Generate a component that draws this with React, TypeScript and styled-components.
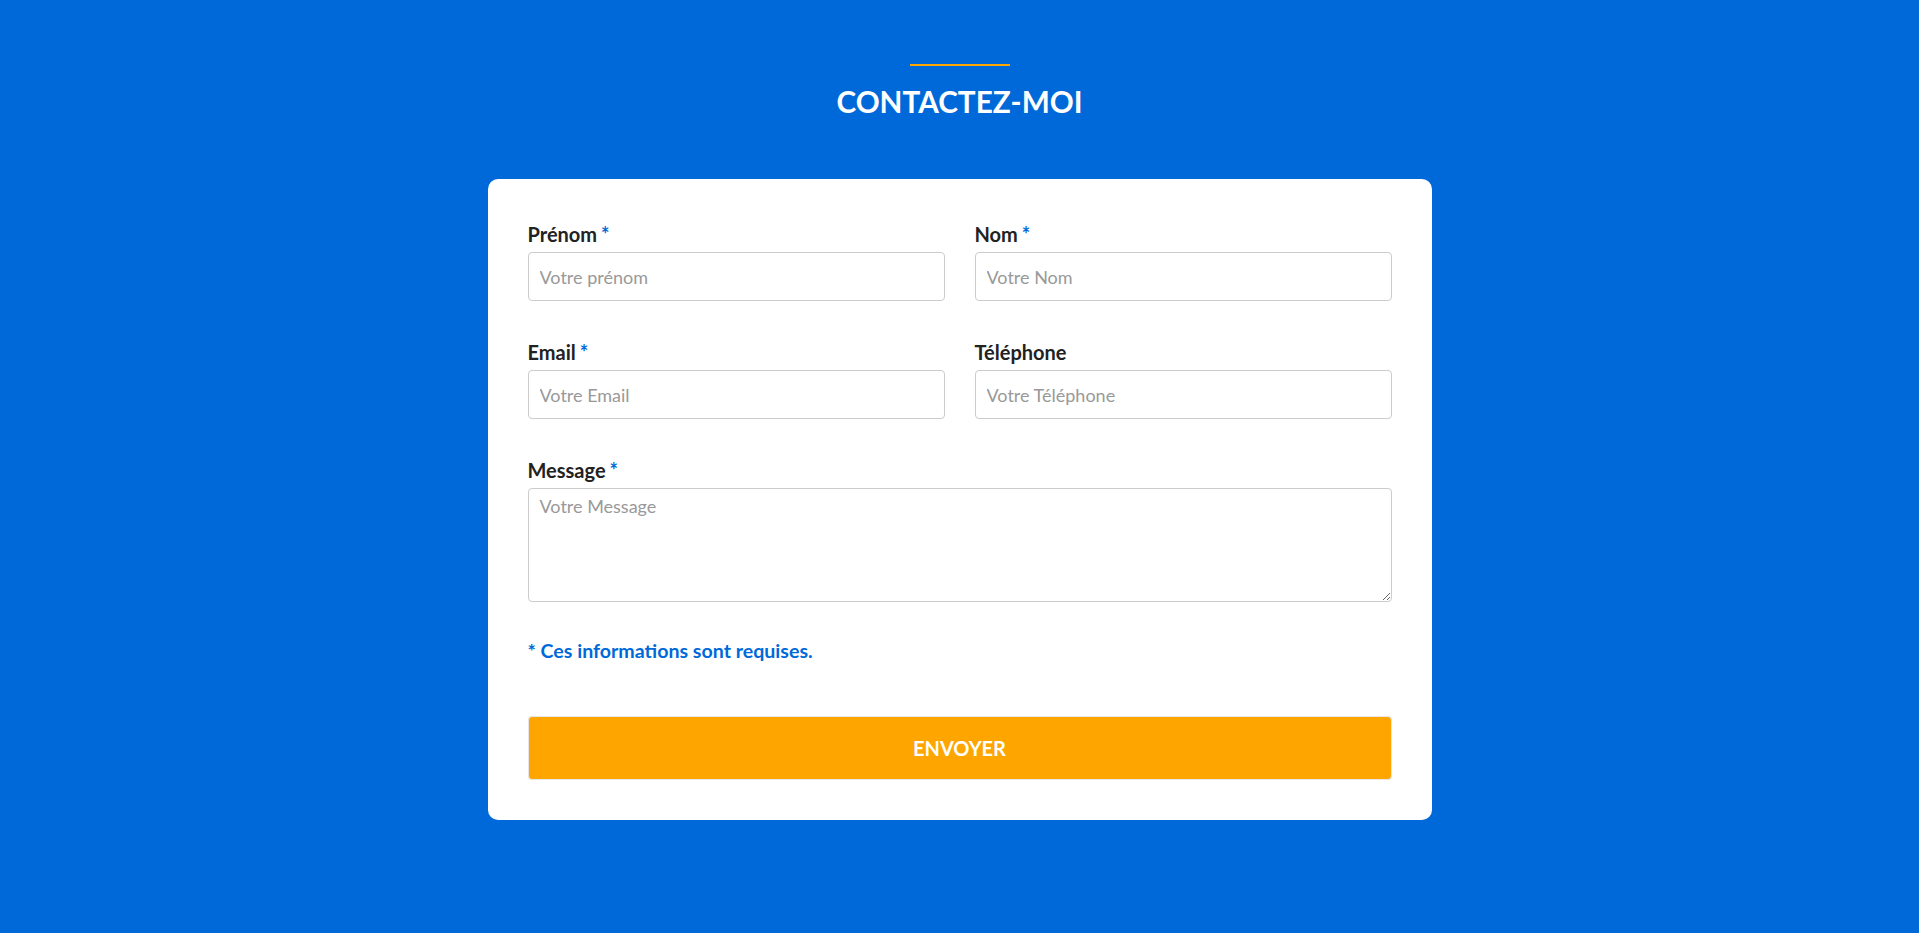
import React from "react";
import styled, { createGlobalStyle } from "styled-components";

const GlobalStyle = createGlobalStyle`
  html, body {
    margin: 0;
    padding: 0;
    background: #0069d9;
    font-family: Lato, "Open Sans", sans-serif;
  }
  * { box-sizing: border-box; }
`;

const Page = styled.section`
  min-height: 100vh;
  background: #0069d9;
  display: flex;
  flex-direction: column;
  align-items: center;
  padding-top: 64px;
`;

const Accent = styled.div`
  width: 100px;
  height: 2px;
  background: #ffa500;
`;

const Title = styled.h2`
  margin: 18px 0 59px;
  font-family: Lato, sans-serif;
  font-weight: 700;
  font-size: 29.7px;
  line-height: 36px;
  color: #ffffff;
  text-transform: uppercase;
`;

const Card = styled.form`
  width: 944px;
  background: #ffffff;
  border-radius: 10px;
  padding: 40px;
`;

const Row = styled.div`
  display: grid;
  grid-template-columns: 1fr 1fr;
  column-gap: 30px;
`;

const Group = styled.div`
  display: flex;
  flex-direction: column;
  margin-bottom: 36px;
`;

const Label = styled.label`
  font-family: Lato, sans-serif;
  font-weight: 700;
  font-size: 20px;
  line-height: 30px;
  color: #222222;
  margin-bottom: 3px;
`;

const Star = styled.span`
  color: #0069d9;
  margin-left: 4px;
`;

const Input = styled.input`
  display: block;
  width: 100%;
  height: 49px;
  border: 1px solid #cccccc;
  border-radius: 4px;
  padding: 0 11px;
  font-family: Lato, sans-serif;
  font-size: 18px;
  color: #333;
  outline: none;
  &::placeholder { color: #999999; }
`;

const TextArea = styled.textarea`
  display: block;
  width: 100%;
  height: 114px;
  border: 1px solid #cccccc;
  border-radius: 4px;
  padding: 6px 11px;
  font-family: Lato, sans-serif;
  font-size: 18px;
  color: #333;
  outline: none;
  &::placeholder { color: #999999; }
`;

const Note = styled.p`
  margin: -2px 0 50px;
  font-family: Lato, sans-serif;
  font-weight: 700;
  font-size: 19.6px;
  line-height: 30px;
  color: #0069d9;
`;

const Submit = styled.button`
  display: block;
  width: 100%;
  height: 64px;
  background: #ffa500;
  border: 1px solid #e6e6e6;
  border-radius: 4px;
  color: #ffffff;
  font-family: Lato, sans-serif;
  font-weight: 700;
  font-size: 20px;
  text-transform: uppercase;
  cursor: pointer;
`;

export default function App() {
  return (
    <>
      <GlobalStyle />
      <Page>
        <Accent />
        <Title>Contactez-moi</Title>
        <Card onSubmit={(e) => e.preventDefault()}>
          <Row>
            <Group>
              <Label>Prénom<Star>*</Star></Label>
              <Input placeholder="Votre prénom" />
            </Group>
            <Group>
              <Label>Nom<Star>*</Star></Label>
              <Input placeholder="Votre Nom" />
            </Group>
          </Row>
          <Row>
            <Group>
              <Label>Email<Star>*</Star></Label>
              <Input placeholder="Votre Email" />
            </Group>
            <Group>
              <Label>Téléphone</Label>
              <Input placeholder="Votre Téléphone" />
            </Group>
          </Row>
          <Group>
            <Label>Message<Star>*</Star></Label>
            <TextArea placeholder="Votre Message" />
          </Group>
          <Note>* Ces informations sont requises.</Note>
          <Submit type="submit">Envoyer</Submit>
        </Card>
      </Page>
    </>
  );
}
